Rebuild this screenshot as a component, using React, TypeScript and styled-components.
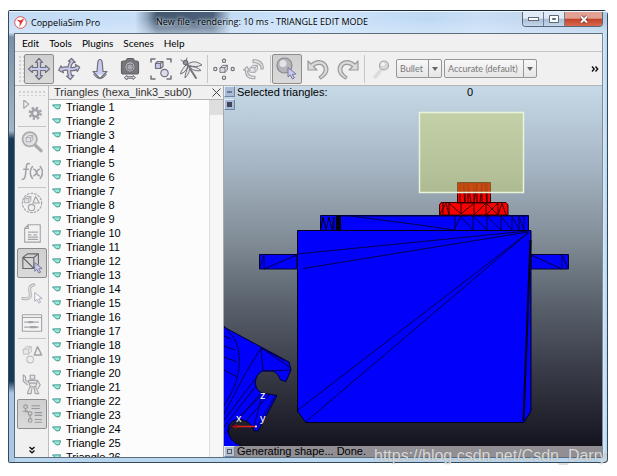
import React from "react";
import styled, { createGlobalStyle, css } from "styled-components";

const GlobalStyle = createGlobalStyle`
  * { box-sizing: border-box; }
  body { margin: 0; background: #fff; }
  button, select { font: inherit; color: inherit; margin: 0; padding: 0; }
`;

const uiFont = `Lato, "Open Sans", sans-serif`;
const titleFont = `"Open Sans", "Noto Sans", sans-serif`;
const listFont = `"Liberation Sans", Arial, sans-serif`;

const Page = styled.main`
  display: flex;
  height: 100vh;
  padding: 10px 9px 13px 8px;
  font-family: ${uiFont};
  font-size: 10px;
  color: #000;
`;

const Window = styled.section`
  position: relative;
  flex: 1;
  min-width: 0;
  display: flex;
  flex-direction: column;
  padding: 0 4px 4px 5px;
  border: 1px solid #34495c;
  border-top-color: #1c2a36;
  border-radius: 2px 5px 4px 2px;
  background:
    linear-gradient(#c3dbf5 0 22px, #7b90a8 26px, #a3b5c8 120px, #16395a 128px 370px, #a9c8e4 382px) left / 6px 100% no-repeat,
    linear-gradient(90deg, #eaf5ff, #b7d5ef) right / 6px 100% no-repeat,
    #b8d6ee;
`;

const TitleBar = styled.header`
  display: flex;
  align-items: flex-start;
  height: 22px;
  margin: 0 -4px 0 -5px;
  padding: 0 4px 0 5px;
  border-top: 1px solid #eef6ff;
  font-family: ${titleFont};
  font-size: 9px;
  background:
    linear-gradient(#0000 35%, #dcebfa99),
    linear-gradient(90deg, #c3dbf5 0, #c8dff8 126px, #8fa5bc 138px, #43586f 148px, #4a5f78 204px, #c2daf5 222px, #cfe5fc 300px, #bfd9f3 420px, #c9dff5 470px, #b3cce5 100%);
`;

const AppName = styled.div`
  display: flex;
  align-items: center;
  gap: 4px;
  width: 142px;
  height: 20px;
`;

const DocTitle = styled.h1`
  flex: 1;
  min-width: 0;
  overflow: hidden;
  margin: 0;
  font-size: 9px;
  font-weight: 400;
  line-height: 20px;
  white-space: nowrap;
  color: #000;
  text-shadow: 0 0 3px #dcebfa, 0 0 4px #dcebfa;
`;

const WindowButtons = styled.div`
  display: flex;
  border: 1px solid #55697d;
  border-top: 0;
  border-radius: 0 0 4px 4px;
  overflow: hidden;
`;

const WindowButton = styled.button<{ $close?: boolean }>`
  display: grid;
  place-items: center;
  width: ${(p) => (p.$close ? 37 : 21)}px;
  height: 14px;
  border: 0;
  border-right: ${(p) => (p.$close ? "0" : "1px solid #6b7e92")};
  background: ${(p) =>
    p.$close
      ? "linear-gradient(#e2a193 0 45%, #c2412a 50%, #d9684b)"
      : "linear-gradient(#dfeaf6 0 45%, #a9bdd3 50%, #c4d6e8)"};
`;

const Client = styled.div`
  flex: 1;
  min-height: 0;
  display: flex;
  flex-direction: column;
  border: 1px solid #5c6d7e;
  border-right-color: #7b8c9c;
  background: #f0f0f0;
`;

const MenuBar = styled.nav`
  display: flex;
  gap: 10px;
  height: 18px;
  padding: 0 7px;
  border-bottom: 1px solid #c4c4c4;
`;

const MenuItem = styled.button`
  border: 0;
  background: none;
  line-height: 18px;
`;

const Toolbar = styled.div`
  display: flex;
  align-items: center;
  height: 34px;
  padding: 0 3px 0 3px;
  border-bottom: 1px solid #b5b5b5;
`;

const Grip = styled.span<{ $row?: boolean }>`
  flex: none;
  width: ${(p) => (p.$row ? 28 : 6)}px;
  height: ${(p) => (p.$row ? 6 : 28)}px;
  background: radial-gradient(circle, #d0d0d0 1px, #f0f0f000 1px) 0 0 / 4px 4px;
`;

const ToolGroup = styled.div<{ $width: number }>`
  display: flex;
  flex: none;
  justify-content: space-between;
  width: ${(p) => p.$width}px;
`;

const ToolButton = styled.button<{ $active?: boolean; $faded?: boolean }>`
  display: grid;
  place-items: center;
  flex: none;
  width: 30px;
  height: 30px;
  border: 1px solid transparent;
  border-radius: 2px;
  background: none;
  ${(p) =>
    p.$active &&
    css`
      border-color: #8d8d8d;
      background: linear-gradient(#cfcfcf, #dadada);
    `}
  svg { opacity: ${(p) => (p.$faded ? 0.6 : 1)}; }
`;

const Divider = styled.span<{ $row?: boolean }>`
  flex: none;
  width: ${(p) => (p.$row ? "28px" : "1px")};
  height: ${(p) => (p.$row ? "1px" : "28px")};
  margin: ${(p) => (p.$row ? "0" : "0 1px")};
  background: #c6c6c6;
`;

const SelectBox = styled.div<{ $width: number }>`
  position: relative;
  flex: none;
  width: ${(p) => p.$width}px;
  height: 19px;
  margin-right: 2px;
  border: 1px solid #969696;
  border-radius: 2px;
  background: linear-gradient(#f8f8f8, #e6e6e6);
  select {
    width: 100%;
    height: 100%;
    padding: 0 12px 0 3px;
    border: 0;
    appearance: none;
    background: none;
    font-size: 9px;
    color: #777;
    opacity: 1;
  }
  svg {
    position: absolute;
    top: 0;
    right: 0;
    height: 100%;
    border-left: 1px solid #969696;
    pointer-events: none;
  }
`;

const MoreButton = styled.button`
  margin-left: auto;
  border: 0;
  background: none;
  line-height: 0;
`;

const Workspace = styled.div`
  flex: 1;
  min-height: 0;
  display: flex;
`;

const SideBar = styled.aside`
  flex: none;
  display: flex;
  flex-direction: column;
  align-items: center;
  width: 34px;
  padding: 4px 1px 0;
  border-right: 1px solid #bdbdbd;
  > ${MoreButton} { margin: 17px 0 0; }
`;

const ListPanel = styled.section`
  flex: none;
  display: flex;
  flex-direction: column;
  width: 175px;
  border-right: 1px solid #aaa;
  font-family: ${listFont};
  font-size: 11px;
`;

const ListHeader = styled.header`
  flex: none;
  display: flex;
  align-items: center;
  justify-content: space-between;
  height: 14px;
  padding: 0 2px 0 5px;
  border-bottom: 1px solid #b5b5b5;
  color: #333;
  h2 { margin: 0; font-size: 11px; font-weight: 400; line-height: 13px; white-space: nowrap; }
  button { border: 0; background: none; line-height: 0; }
`;

const ListBody = styled.div`
  flex: 1;
  min-height: 0;
  display: flex;
  background: #fcfcfc;
`;

const Items = styled.ul`
  flex: 1;
  margin: 0;
  padding: 0;
  overflow: hidden;
  list-style: none;
`;

const Item = styled.li`
  display: flex;
  align-items: center;
  gap: 5px;
  height: 14px;
  padding-left: 3px;
  line-height: 14px;
`;

const ScrollTrack = styled.div`
  width: 14px;
  border-left: 1px solid #dcdcdc;
  background: #f6f6f6;
  &::before { content: ""; display: block; height: 15px; background: #dedede; }
`;

const Viewport = styled.section`
  position: relative;
  flex: 1;
  min-width: 0;
  display: flex;
  flex-direction: column;
  justify-content: space-between;
  overflow: hidden;
  background: linear-gradient(#c7d9e7 0, #a5b4c2 22%, #7e8993 43%, #5c6570 57%, #3a3d49 76%, #14141f 97%);
  font-family: ${listFont};
  font-size: 11px;
`;

const SceneArt = styled.svg`
  position: absolute;
  inset: 0;
  width: 100%;
  height: 100%;
`;

const SceneInfo = styled.div`
  position: relative;
  display: grid;
  grid-template-columns: 11px 1fr 2fr;
  column-gap: 2px;
  line-height: 13px;
  output { padding-left: 107px; }
`;

const SquareButton = styled.button`
  display: grid;
  place-items: center;
  width: 11px;
  height: 11px;
  border: 1px solid #6f86a3;
  border-top-color: #e1ebf7;
  border-left-color: #e1ebf7;
  background: #a9bcd7;
`;

const StatusLine = styled.footer`
  position: relative;
  display: flex;
  align-items: center;
  gap: 2px;
  height: 11px;
  background: #918f94;
  line-height: 11px;
  ${SquareButton} { background: #b6c0cd; }
`;

const Watermark = styled.div`
  position: absolute;
  right: 0;
  bottom: -3px;
  font-family: ${listFont};
  font-size: 16px;
  line-height: 18px;
  color: #ffffffb8;
  text-shadow: 0 0 1px #777;
  pointer-events: none;
`;

const S = "#70707a";
const L = "#c9cbee";

type IconProps = { children: React.ReactNode; size?: number };
const Icon = ({ children, size = 24 }: IconProps) => (
  <svg width={size} height={size} viewBox="0 0 24 24" fill="none" stroke={S} strokeWidth="1.2" strokeLinejoin="round" strokeLinecap="round" aria-hidden="true">
    {children}
  </svg>
);

const Cube = ({ x, y, s }: { x: number; y: number; s: number }) => (
  <g transform={`translate(${x} ${y}) scale(${s})`} fill="#dcdce6">
    <path d="M0 3h6v6H0zM0 3l3-3h6L6 3M9 0v6L6 9" />
  </g>
);

const Pointer = ({ x, y, fill = L }: { x: number; y: number; fill?: string }) => (
  <path transform={`translate(${x} ${y})`} d="M0 0v9l2.4-2 2 4 2-1-2-3.6 3.2-.4z" fill={fill} stroke="#77779b" strokeWidth="1" />
);

const iconArt: Record<string, React.ReactNode> = {
  move: (
    <path d="M12 1.500l3.500 4h-2v5h5v-2l4 3.500-4 3.500v-2h-5v5h2l-3.500 4-3.500-4h2v-5h-5v2l-4-3.500 4-3.500v2h5v-5h-2z" fill={L} />
  ),
  rotate: (
    <path d="M14.500 1.500l3.800 4-2.300.1c-1.400 1.600-2 3.200-2.200 5 2 .3 3.800-.1 5.300-1.100l-.6-2 4.200 2.700-2.400 4.300-.8-1.900c-1.900 1-3.800 1.300-5.800 1-.1 1.900.2 3.500 1.100 5l2-.3-3.300 4.200-4-3.400 2-.2c-.8-1.700-1.100-3.500-.9-5.600-1.800-.4-3.400-.3-4.900.4l.7 2-4.700-2.400 2.300-4.500.9 1.900c1.900-.9 3.900-1 6-.5.3-2 1-3.900 2.300-5.700l-1.900-.3z" fill={L} />
  ),
  drop: <path d="M12 2.500c1.500 0 2 1 2.200 3l.8 9h4L12 21.500 5 14.500h4l.8-9c.2-2 .7-3 2.200-3zM6 17.500c1.500 2 3.500 4 6 4s4.500-2 6-4" fill={L} />,
  camera: (
    <>
      <path d="M5.500 4h2L9.500 1.500h5.500L17 4h1.500q2 0 2 2v9q0 2-2 2h-13q-2 0-2-2V6q0-2 2-2z" fill="#77777b" stroke="#606064" />
      <circle cx="12" cy="10" r="5" fill="#f2f2f2" />
      <circle cx="12" cy="10" r="3.200" fill="#aaaab2" />
      <path d="M6.500 20.500l2.500-2v1.200h6v-1.200l2.500 2-2.500 2v-1.200H9v1.200z" fill="#dcdcf0" strokeWidth="1" />
    </>
  ),
  fit: (
    <>
      <path d="M2 5V2h4M18 2h4v3M22 19v3h-4M6 22H2v-3" strokeWidth="1.500" />
      <g fill={L}><path d="M6.500 6.500h5v5h-5zM6.500 6.500l2-2h5.500l-2.500 2M14 4.500v5l-2.500 2" /></g>
      <circle cx="15.500" cy="16" r="3.700" fill="#dcdcf0" />
    </>
  ),
  dragonfly: (
    <>
      <path d="M8 7l9 14" strokeWidth="2" stroke="#77777b" />
      <circle cx="6.500" cy="5.500" r="2.200" fill="#99999d" />
      <path d="M9 7c4-3 9-3 14 1-4 2-9 2-12.500.5zM11 9.500c4 0 8 1 11 4-4 1-8 0-10.500-2.500zM7 8C4 11 2 14 1.500 17 5 16 8 13 8.500 10zM9 10c-1.500 4-3 7-3 11 3-3 5-7 4.500-10zM2 3l3 2M8 1L7 4" fill="#e8e8e8" strokeWidth="1" />
    </>
  ),
  assemble: (
    <>
      <Cube x={8} y={8} s={0.85} />
      <circle cx="12" cy="3" r="1.800" /><circle cx="12" cy="21.500" r="1.800" />
      <circle cx="2.500" cy="12" r="1.800" /><circle cx="21.500" cy="12" r="1.800" />
    </>
  ),
  transfer: (
    <>
      <Cube x={8} y={8} s={0.85} />
      <path d="M11 2c7-1 12 4 11 10h-2.500c1-4-3-7.500-8.500-7zM13 22.500c-7 1-11-3-10-9L.5 13l4-3.500L7 14l-2 .1c0 4 3 6.300 8 5.800z" fill="#dedede" />
    </>
  ),
  pick: (
    <>
      <circle cx="9.500" cy="8.500" r="7.500" fill="#b4b4ba" stroke="#88888c" />
      <circle cx="8" cy="6.500" r="3.500" fill="#e4e4e6" stroke="none" />
      <Pointer x={13} y={11} />
    </>
  ),
  undo: <path d="M2 4v9h9L7.500 9.500C12 6 17 7 18 11c1 4-2 7-5 9l1.500 2C20 19 23 15 21.500 10 19.500 3 11 1.500 5 7z" fill="#dadada" stroke="#9a9a9a" />,
  redo: <path d="M22 4v9h-9l3.500-3.500C12 6 7 7 6 11c-1 4 2 7 5 9l-1.500 2C4 19 1 15 2.500 10 4.500 3 13 1.500 19 7z" fill="#dadada" stroke="#9a9a9a" />,
  pin: (
    <>
      <path d="M6 20l6-7" stroke="#d0d0d0" strokeWidth="3.500" />
      <circle cx="15" cy="8.500" r="4.500" fill="#c8c8c8" stroke="#777" />
      <circle cx="13.800" cy="7.300" r="2" fill="#f4f4f4" stroke="none" />
    </>
  ),
  simSettings: (
    <>
      <path d="M3 0v9l5.500-4.500z" />
      <circle cx="15.500" cy="14.500" r="6" strokeWidth="2.600" strokeLinecap="butt" strokeDasharray="2.500 2.212" />
      <circle cx="15.500" cy="14.500" r="3.600" strokeWidth="3" />
    </>
  ),
  magnify: (
    <>
      <path d="M15 15l7 6.500" strokeWidth="3.500" stroke="#808084" />
      <circle cx="9.500" cy="9" r="7.800" strokeWidth="2" fill="#d8d8dc" stroke="#808084" />
      <Cube x={6} y={5} s={0.75} />
    </>
  ),
  fx: (
    <path d="M9 3C6 1.500 6 5 5.500 9S5 21 1.500 20M3 9h5M12.500 6c-3 4-3 9 0 13M21 6c3 4 3 9 0 13M14 9c4 0 2 7 6 7M20 9c-3 0-3 7-6 7" strokeWidth="1.700" />
  ),
  shapes: (
    <>
      <circle cx="12" cy="12" r="10.500" strokeDasharray="2 2" />
      <Cube x={4} y={5} s={0.75} />
      <path d="M16 5l4 7h-7z" fill="#eee" /><circle cx="11.500" cy="17" r="3.500" fill="#eee" />
    </>
  ),
  script: (
    <>
      <path d="M8 3h13v19H4V7zM8 3v4H4" fill="#f4f4f4" />
      <path d="M8 11h10M8 14h4M14 14h4M8 16.500h10M8 19h10" strokeDasharray="3 1" />
    </>
  ),
  meshEdit: (
    <>
      <path d="M2 6h12v12H2zM2 6l5-4h12l-5 4M19 2v11l-5 5M2 6l12 12" stroke="#66666a" />
      <Pointer x={15} y={12} />
    </>
  ),
  path: (
    <>
      <path d="M2 18c7 1 9-1 8-6C9 7 9 4 14 3" strokeWidth="3.200" stroke="#88888c" />
      <path d="M2 18c7 1 9-1 8-6C9 7 9 4 14 3" strokeWidth="1.200" stroke="#e4e4e4" />
      <Pointer x={15} y={12} fill="#fff" />
    </>
  ),
  dialog: (
    <>
      <path d="M1.500 3h21v18h-21zM1.500 6h21" fill="#f6f6f6" />
      <path d="M4 11h16M4 16.500h16" strokeDasharray="3 1" /><path d="M9 11h3M11 16.500h5" strokeWidth="2.600" />
    </>
  ),
  collection: (
    <>
      <g opacity=".6"><Cube x={3} y={4} s={0.9} /></g>
      <path d="M18 4l4.500 9h-8z" strokeWidth="1.600" /><circle cx="10" cy="18" r="3.700" fill="#eee" opacity=".6" />
    </>
  ),
  robot: (
    <path d="M10 2.500h5v4h-5zM8 8h10l-2 7h-6zM8 10L5 8V4L2.500 2v7l4.500 4M18 8l3 5-2.500 4M10 15l-2 4-1 3.500h4l1-6M14 15l1.500 7.500h4l-1.500-3-2-4M10 11h6" fill="#dedede" />
  ),
  tree: (
    <>
      <circle cx="5" cy="4" r="2" /><circle cx="10" cy="11.500" r="2" /><circle cx="10" cy="19" r="2" />
      <path d="M5 6.500v3h3M10 14v2.500M2.500 9h5M12 3h8M12 6h8M15.500 10.500h7M15.500 13.500h7M15.500 18h7M15.500 21h7" strokeWidth="1.300" />
    </>
  ),
};

type Tool = { icon: string; label: string; active?: boolean; faded?: boolean };

const Tools = ({ tools, size }: { tools: Tool[]; size?: number }) => (
  <>
    {tools.map((t) => (
      <ToolButton key={t.icon} $active={t.active} $faded={t.faded} aria-label={t.label} aria-pressed={t.active}>
        <Icon size={size}>{iconArt[t.icon]}</Icon>
      </ToolButton>
    ))}
  </>
);

const navigationTools: Tool[] = [
  { icon: "move", label: "Pan camera", active: true },
  { icon: "rotate", label: "Rotate camera" },
  { icon: "drop", label: "Shift camera" },
  { icon: "camera", label: "Camera angle" },
  { icon: "fit", label: "Fit to view" },
  { icon: "dragonfly", label: "Fly mode" },
];
const assemblyTools: Tool[] = [
  { icon: "assemble", label: "Assemble" },
  { icon: "transfer", label: "Transfer", faded: true },
];
const editTools: Tool[] = [
  { icon: "pick", label: "Click selection", active: true },
  { icon: "undo", label: "Undo" },
  { icon: "redo", label: "Redo" },
];
const sideGroups: Tool[][] = [
  [{ icon: "simSettings", label: "Simulation settings", faded: true }],
  [
    { icon: "magnify", label: "Object properties", faded: true },
    { icon: "fx", label: "Calculation modules", faded: true },
  ],
  [
    { icon: "shapes", label: "Collections", faded: true },
    { icon: "script", label: "Scripts", faded: true },
    { icon: "meshEdit", label: "Shape edit mode", active: true },
    { icon: "path", label: "Path edit mode", faded: true },
    { icon: "dialog", label: "Selection dialog", faded: true },
  ],
  [
    { icon: "collection", label: "Model browser", faded: true },
    { icon: "robot", label: "Models", faded: true },
    { icon: "tree", label: "Scene hierarchy", active: true, faded: true },
  ],
];

const Chevrons = ({ down }: { down?: boolean }) => (
  <svg width="8" height="8" viewBox="0 0 8 8" fill="none" stroke="#111" strokeWidth="1.400" aria-hidden="true">
    <path d={down ? "M1.500 1L4 3.200 6.500 1M1.500 4.500L4 6.700 6.500 4.500" : "M1 1.500L3.200 4 1 6.500M4.500 1.500L6.700 4 4.500 6.500"} />
  </svg>
);

const Dropdown = ({ label, value, width }: { label: string; value: string; width: number }) => (
  <SelectBox $width={width}>
    <select aria-label={label} disabled>
      <option>{value}</option>
    </select>
    <svg width="13" viewBox="0 0 12 17" aria-hidden="true"><path d="M3 7h6L6 11z" fill="#666" /></svg>
  </SelectBox>
);

const Scene = () => (
  <SceneArt viewBox="224 86 378 372" preserveAspectRatio="xMinYMin slice" role="img" aria-label="Triangle mesh of a robot link">
    <g fill="#0000fb" stroke="#000030" strokeWidth="1">
      <path d="M320.500 215.500H528.500V231H320.500z" />
      <path d="M259.500 254.500H297V269H259.500zM531 254.500H568.500V269H531z" />
      <path d="M297.500 230.500H531V411L524 422.500H305.500L297.500 411z" stroke="#000018" />
      <path d="M223 326.500L262 347.500 289 362 291 370 286 381.500 280.500 380Q277 371 271 371H263C258 373 255 378 255.500 384 256 390 261 394 268 394L277 395.500 258 431 254 431C252 424 247 420 240 419.500 232 419.500 228 424 228 430 228.500 439 235 444 246 448H223z" />
    </g>
    <g fill="none" stroke="#000050" strokeWidth="1">
      <path d="M350 216L420 225 455 230M341 216H528" />
      <path d="M455 216V231M460 216L473 230V216L487 230V216L501 230V216L512 230V216L519 230V216L524 230V216M455 228L461 216" />
      <path d="M297 254L528 231M303 268.500L528 232M529 232L298 410M529 232L305.500 422M259.500 268L264 255V269L297 255" />
      <path d="M531 255L562 269V255L568 268" />
      <path d="M261 348L245 374 224 414M261 348L263 371M261 348L291 368M262 348L285 361M264 371L291 370M224 420L256 378M224 427L256 386M225 434L261 393M236 420L263 394M246 421L269 395M253 430L262 396M255 430L275 396M224 326L234 338Q244 356 236 382Q231 396 224 405M224 336L231 339M224 346L235 350M224 357L237 362M224 370L237 377" />
    </g>
    <path d="M530.500 240L523.500 421" stroke="#000018" strokeWidth="2" />
    <path d="M320.500 216V231L323 217 326 230 329 217 332 230 334 217V231" fill="none" stroke="#000018" />
    <path d="M336 215.500h5V231h-5z" fill="#000010" />
    <g fill="#fa0000" stroke="#350000" strokeWidth="1">
      <path d="M457.500 182.500H490.500V203H457.500zM441 202.500H506L508 205V215H439.500V205z" />
      <path d="M460 183V203M463 183L465 203V183M468 203V183L471 203M474 183V203L477 183V203M480 203L482 183V203M485 183L487 203V183M439.500 215L446 203 449 215V203L461 214V203M461 214L474 203V215L486 203V215L498 203V215M486 203L498 215 502 203 506 215M443 203V215" fill="none" />
    </g>
    <rect x="419.500" y="112.500" width="104" height="80" fill="#cbd666" fillOpacity=".43" />
    <path d="M458 183H490V192H458z" fill="#c03a00" fillOpacity=".6" />
    <rect x="419.500" y="112.500" width="104" height="80" fill="none" stroke="#e8f3dc" strokeWidth="1.500" />
    <path d="M233 426.500H256" stroke="#e02020" strokeWidth="1.500" />
    <path d="M231 426.500l6-2.500v5z" fill="#8c1010" />
    <circle cx="256" cy="426.500" r="1" fill="#fff" />
    <g fill="#fff" fontFamily="Liberation Sans, Arial, sans-serif" fontSize="11">
      <text x="260" y="399">z</text><text x="236" y="422">x</text><text x="260" y="422">y</text>
    </g>
  </SceneArt>
);

const triangles = Array.from({ length: 26 }, (_, i) => `Triangle ${i + 1}`);

export default function App() {
  return (
    <>
      <GlobalStyle />
      <Page>
        <Window>
          <TitleBar>
            <AppName>
              <svg width="13" height="13" viewBox="0 0 13 13" aria-hidden="true">
                <circle cx="6.500" cy="6.500" r="5.800" fill="#fff" stroke="#e05252" />
                <path d="M2.500 3.500l4 1 4-2.500-2.500 4.500L5.500 11l.3-4.500z" fill="#e03030" />
              </svg>
              CoppeliaSim Pro
            </AppName>
            <DocTitle>New file - rendering: 10 ms - TRIANGLE EDIT MODE</DocTitle>
            <WindowButtons>
              <WindowButton aria-label="Minimize">
                <svg width="11" height="5"><rect x=".5" y=".5" width="10" height="3" fill="#fff" stroke="#5b6877" /></svg>
              </WindowButton>
              <WindowButton aria-label="Maximize">
                <svg width="10" height="9"><path d="M.5.5h9v7h-9zM3.500 3.500h3v1h-3z" fill="#fff" stroke="#5b6877" /></svg>
              </WindowButton>
              <WindowButton $close aria-label="Close">
                <svg width="10" height="9" viewBox="0 0 10 9">
                  <path d="M2 1.500l6 6M8 1.500l-6 6" stroke="#6b2d28" strokeWidth="3.500" />
                  <path d="M2 1.500l6 6M8 1.500l-6 6" stroke="#fff" strokeWidth="2" />
                </svg>
              </WindowButton>
            </WindowButtons>
          </TitleBar>
          <Client>
            <MenuBar>
              {["Edit", "Tools", "Plugins", "Scenes", "Help"].map((m) => <MenuItem key={m}>{m}</MenuItem>)}
            </MenuBar>
            <Toolbar>
              <Grip />
              <ToolGroup $width={182}><Tools tools={navigationTools} /></ToolGroup>
              <Divider />
              <ToolGroup $width={60}><Tools tools={assemblyTools} size={22} /></ToolGroup>
              <Divider />
              <ToolGroup $width={91}><Tools tools={editTools} /></ToolGroup>
              <Divider />
              <ToolGroup $width={30}><Tools tools={[{ icon: "pin", label: "Dynamics content", faded: true }]} /></ToolGroup>
              <Dropdown label="Physics engine" value="Bullet" width={46} />
              <Dropdown label="Simulation accuracy" value="Accurate (default)" width={93} />
              <MoreButton aria-label="More tools"><Chevrons /></MoreButton>
            </Toolbar>
            <Workspace>
              <SideBar>
                <Grip $row />
                {sideGroups.map((g, i) => (
                  <React.Fragment key={i}>
                    {i > 0 && <Divider $row />}
                    <Tools tools={g} size={22} />
                  </React.Fragment>
                ))}
                <MoreButton aria-label="More modes"><Chevrons down /></MoreButton>
              </SideBar>
              <ListPanel>
                <ListHeader>
                  <h2>Triangles (hexa_link3_sub0)</h2>
                  <button aria-label="Close list">
                    <svg width="9" height="9" stroke="#444"><path d="M.5.5l8 8M8.500.5l-8 8" /></svg>
                  </button>
                </ListHeader>
                <ListBody>
                  <Items>
                    {triangles.map((t) => (
                      <Item key={t}>
                        <svg width="9" height="6" viewBox="0 0 9 6" aria-hidden="true">
                          <path d="M.5 1L8.500.8 7.500 4.500 4.500 5z" fill="#9fe8dc" stroke="#3b968c" />
                        </svg>
                        {t}
                      </Item>
                    ))}
                  </Items>
                  <ScrollTrack />
                </ListBody>
              </ListPanel>
              <Viewport>
                <Scene />
                <SceneInfo>
                  <SquareButton aria-label="Collapse info"><svg width="5" height="2"><path d="M0 1h5" stroke="#334" /></svg></SquareButton>
                  <span>Selected triangles:</span>
                  <output>0</output>
                  <SquareButton aria-label="Toggle view"><svg width="5" height="5"><rect width="5" height="5" fill="#445" /></svg></SquareButton>
                </SceneInfo>
                <StatusLine>
                  <SquareButton aria-label="Toggle status"><svg width="5" height="5"><rect x=".5" y=".5" width="4" height="4" fill="none" stroke="#556" /></svg></SquareButton>
                  Generating shape... Done.
                </StatusLine>
              </Viewport>
            </Workspace>
          </Client>
          <Watermark>https://blog.csdn.net/Csdn_Darry</Watermark>
        </Window>
      </Page>
    </>
  );
}
